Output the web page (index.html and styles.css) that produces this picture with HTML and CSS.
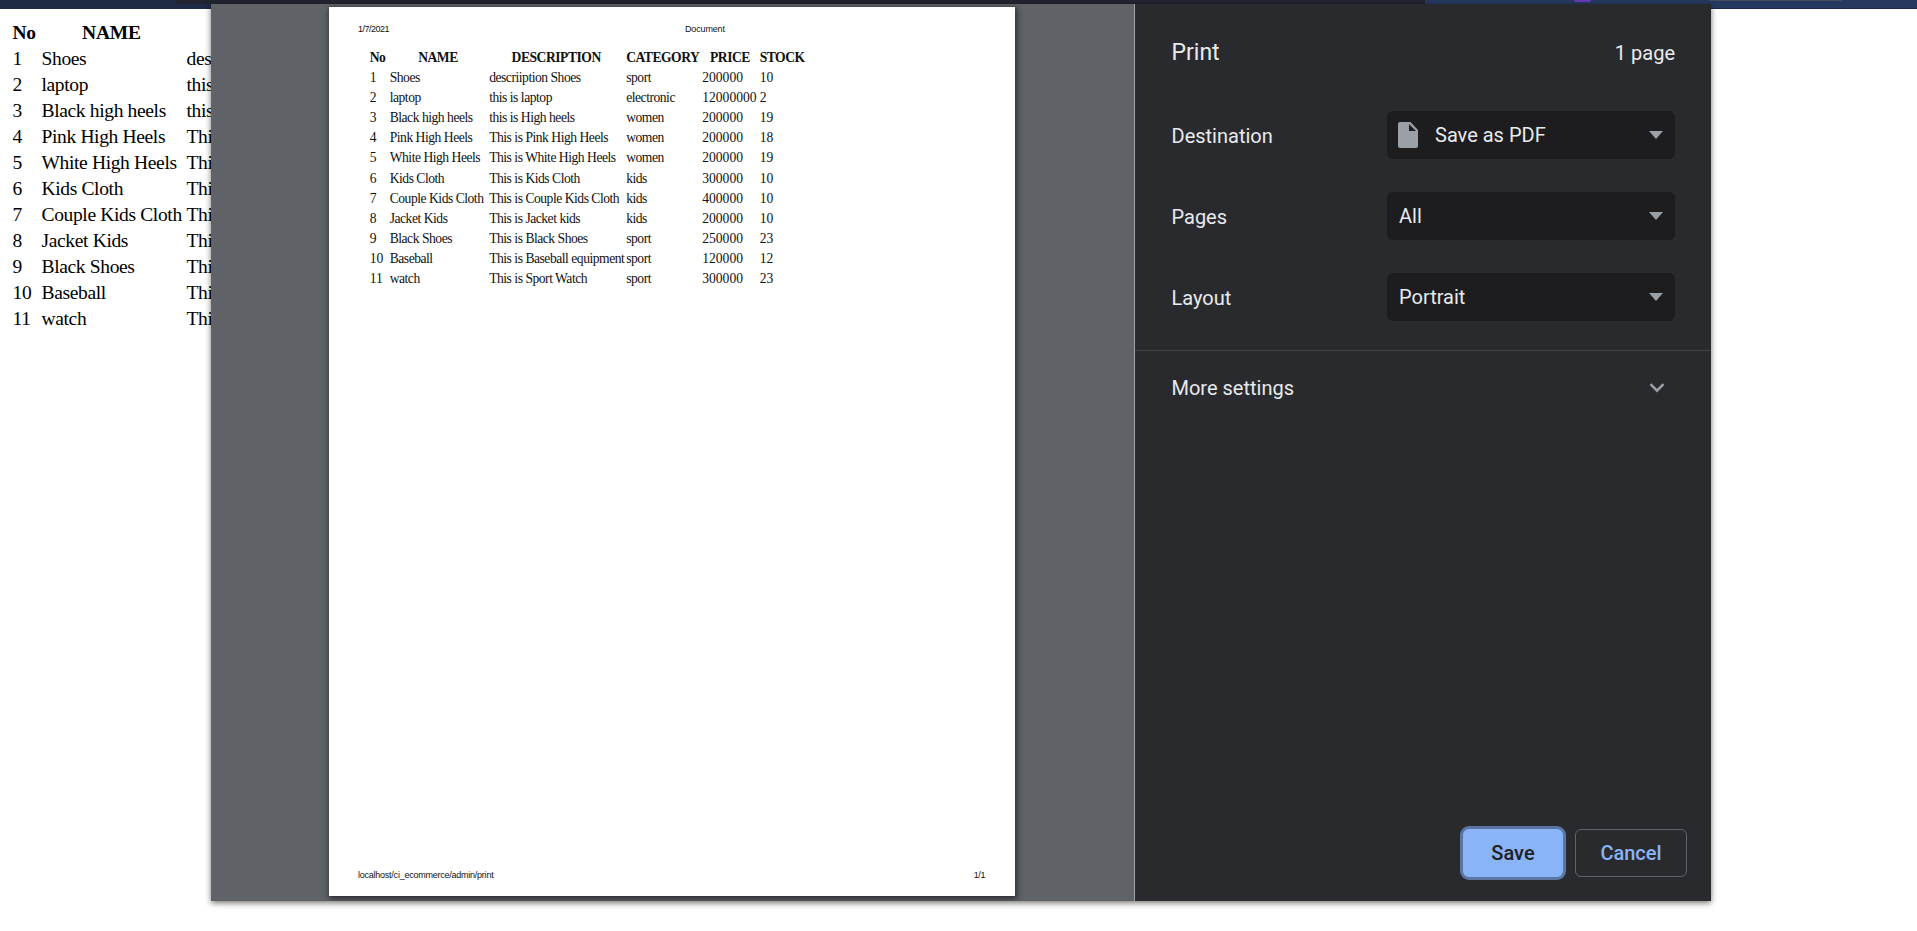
FILE: index.html
```html
<!DOCTYPE html>
<html lang="en">
<head>
<meta charset="utf-8">
<title>Document</title>
<link rel="stylesheet" href="styles.css">
</head>
<body>
<div class="browser-bar"><span class="bar-left"></span><span class="bar-mid"></span><span class="bar-right"><i class="tab-mark"></i><i class="tab-line"></i></span></div>
<main class="source">
  <div class="source-table" id="source"></div>
</main>
<div class="dialog">
  <section class="preview">
    <article class="sheet">
      <header class="sheet-head"><span class="date">1/7/2021</span><span class="doc-title">Document</span></header>
      <div class="print-table" id="print"></div>
      <footer class="sheet-foot"><span class="url">localhost/ci_ecommerce/admin/print</span><span class="num">1/1</span></footer>
    </article>
  </section>
  <aside class="panel">
    <header class="panel-head"><h1>Print</h1><span>1 page</span></header>
    <div class="settings">
      <div class="row"><label>Destination</label>
        <div class="select">
          <svg class="file" width="20" height="26" viewBox="0 0 20 26"><path fill="#9aa0a6" fill-rule="evenodd" d="M2 0H12.500L20 8V24Q20 26 18 26H2Q0 26 0 24V2Q0 0 2 0ZM11 2V9H18Z"/></svg>
          <span>Save as PDF</span><svg class="caret" width="14" height="8" viewBox="0 0 14 8"><path fill="#9aa0a6" d="M0 0H14L7 8Z"/></svg></div></div>
      <div class="row"><label>Pages</label>
        <div class="select"><span>All</span><svg class="caret" width="14" height="8" viewBox="0 0 14 8"><path fill="#9aa0a6" d="M0 0H14L7 8Z"/></svg></div></div>
      <div class="row"><label>Layout</label>
        <div class="select"><span>Portrait</span><svg class="caret" width="14" height="8" viewBox="0 0 14 8"><path fill="#9aa0a6" d="M0 0H14L7 8Z"/></svg></div></div>
    </div>
    <div class="more"><span>More settings</span><svg width="16" height="10" viewBox="0 0 16 10"><path fill="none" stroke="#9aa0a6" stroke-width="2.500" d="M1.500 1.200L8 7.700L14.500 1.200"/></svg></div>
    <footer class="actions"><button class="save">Save</button><button class="cancel">Cancel</button></footer>
  </aside>
</div>
<script src="script.js"></script>
</body>
</html>
```
FILE: styles.css
```css
* { box-sizing: border-box; }
html, body { height: 100%; }
body { margin: 0; background: #fff; overflow: hidden; }

.browser-bar { display: flex; height: 9px; }
.bar-left { width: 176px; background: #1f2a45; }
.bar-mid { width: 1249px; background: linear-gradient(#22242f 4px, #1f2a45 4px); }
.bar-right { flex: 1; display: flex; background: #263a60; border-bottom: 1px solid #1c2748; }
.tab-mark { width: 17px; height: 2px; margin-left: 149px; background: #6b3bb8; border-radius: 0 0 2px 2px; }
.tab-line { width: 132px; height: 1px; margin-left: 119px; background: #454d5c; }

.source { padding: 10px; font: 19.500px/26px "Liberation Serif", "Times New Roman", serif; color: #000; }
.source-table { display: grid; grid-template-columns: 29px 145px 160px; grid-auto-rows: 26px; padding: 1px 0 0 2.500px; white-space: nowrap; letter-spacing: -.35px; }
.source-table b:nth-child(2) { text-align: center; padding-right: 5px; letter-spacing: -.2px; }

.dialog {
  position: absolute; left: 211px; top: 4px; width: 1500px; height: 897px;
  display: flex; box-shadow: 0 2px 6px rgba(0, 0, 0, .55);
}
.preview { width: 924px; background: #5f6267; border-right: 1px solid #a0a2a5; padding: 3px 0 0 118px; overflow: hidden; }
.sheet {
  width: 686px; height: 889px; background: #fff; color: #111; display: flex; flex-direction: column;
  box-shadow: 1px 2px 6px 1px rgba(0, 0, 0, .55);
}
.sheet-head, .sheet-foot { display: flex; font: 9px/12px "Liberation Sans", Arial, sans-serif; color: #111; }
.sheet-head { padding: 16px 0 0 29px; height: 38px; }
.date { width: 327px; letter-spacing: -.5px; }
.doc-title { letter-spacing: -.15px; }
.sheet-head span { white-space: nowrap; }
.print-table {
  display: grid; grid-template-columns: 20px 99.500px 137px 76px 57.500px 60px; grid-auto-rows: 20.180px;
  padding: 2.500px 0 0 40.700px; font: 13.600px/20px "Liberation Serif", "Times New Roman", serif; white-space: nowrap;
}
.print-table .text { letter-spacing: -.48px; }
.print-table b { text-align: center; letter-spacing: -.22px; }
.print-table b:nth-child(2) { padding-right: 3px; }
.print-table b:nth-child(3) { padding-right: 3px; }
.print-table b:nth-child(5) { padding-right: 2px; }
.print-table b:nth-child(1), .print-table b:nth-child(4), .print-table b:nth-child(6) { text-align: left; }
.sheet-foot { margin-top: auto; padding: 0 30px 15px 29px; justify-content: space-between; }
.url { letter-spacing: -.24px; }
.num { letter-spacing: -.4px; }

.panel { width: 576px; background: #292a2d; color: #e8eaed; display: flex; flex-direction: column; font: 20px/24px Roboto, sans-serif; }
.panel-head { display: flex; justify-content: space-between; align-items: center; height: 107px; padding: 0 36px 10px 36.500px; }
.panel-head h1 { margin: 0; padding-top: 1px; font-size: 23px; font-weight: 400; }
.settings { display: flex; flex-direction: column; gap: 33px; height: 239px; padding: 0 36px 0 36.500px; }
.row { display: flex; justify-content: space-between; align-items: center; }
.row label { padding-top: 1px; }
.select { width: 288px; height: 48px; border-radius: 6px; background: #1d1d1f; display: flex; align-items: center; padding: 0 12.500px 0 12px; }
.select .file { margin: 0 17px 0 -1px; }
.select span { padding-bottom: 1px; }
.caret { margin-left: auto; }
.more { height: 76px; border-top: 1px solid #424346; display: flex; justify-content: space-between; align-items: center; padding: 0 46px 2px 36.500px; }
.actions { margin-top: auto; display: flex; justify-content: flex-end; gap: 12px; padding: 0 24px 24px 0; }
.actions button { height: 48px; border-radius: 6px; font: 500 20px/24px Roboto, sans-serif; padding: 0; }
.save { width: 100px; border: 0; background: #8ab4f8; color: #202124; box-shadow: 0 0 0 3px #5a76a2; }
.cancel { width: 112px; border: 1px solid #5f6368; background: transparent; color: #8ab4f8; }
```
FILE: script.js
```js
const products = [
  ["Shoes", "descriiption Shoes", "sport", "200000", "10"],
  ["laptop", "this is laptop", "electronic", "12000000", "2"],
  ["Black high heels", "this is High heels", "women", "200000", "19"],
  ["Pink High Heels", "This is Pink High Heels", "women", "200000", "18"],
  ["White High Heels", "This is White High Heels", "women", "200000", "19"],
  ["Kids Cloth", "This is Kids Cloth", "kids", "300000", "10"],
  ["Couple Kids Cloth", "This is Couple Kids Cloth", "kids", "400000", "10"],
  ["Jacket Kids", "This is Jacket kids", "kids", "200000", "10"],
  ["Black Shoes", "This is Black Shoes", "sport", "250000", "23"],
  ["Baseball", "This is Baseball equipment", "sport", "120000", "12"],
  ["watch", "This is Sport Watch", "sport", "300000", "23"]
];
const headings = ["No", "NAME", "DESCRIPTION", "CATEGORY", "PRICE", "STOCK"];

function fill(id, columns) {
  const table = document.getElementById(id);
  const add = (tag, text) => {
    const cell = document.createElement(tag);
    cell.textContent = text;
    if (/[a-z]/i.test(text)) cell.className = "text";
    table.append(cell);
  };
  headings.slice(0, columns).forEach(text => add("b", columns === 3 && text === "DESCRIPTION" ? "" : text));
  products.forEach((product, i) => {
    [String(i + 1), ...product].slice(0, columns).forEach((text, column) =>
      add("span", columns === 3 && column === 2 ? text.slice(0, 3) + (text[3] === "s" ? "s" : "") : text));
  });
}

fill("source", 3);
fill("print", 6);
```
